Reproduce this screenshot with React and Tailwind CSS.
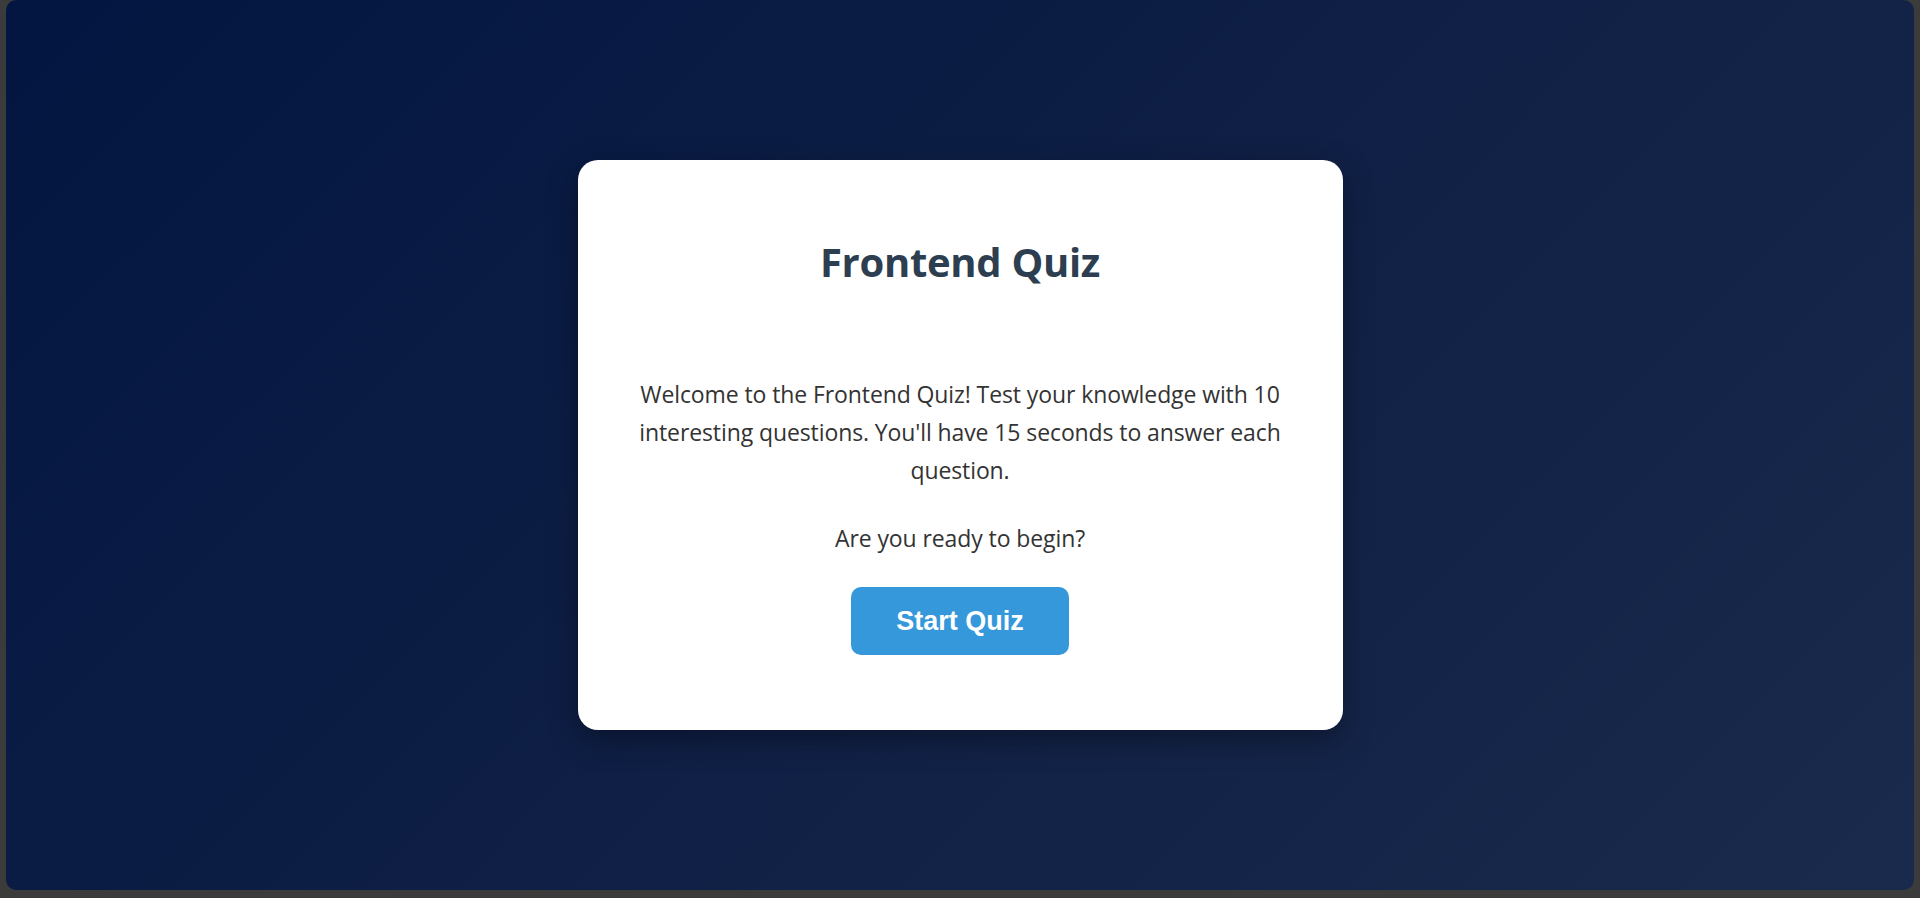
export default function App() {
  return (
    <div className="w-[1920px] h-[898px] bg-[#3b3b3b] pl-[6px] pr-[6px] pb-[8px]">
      <div className="h-full w-full rounded-[10px] bg-[linear-gradient(135deg,#021641_0%,#0f1f45_50%,#1a2a4c_100%)] flex items-start justify-center pt-[160px]">
        <div
          className="w-[765px] h-[570px] bg-white rounded-[20px] shadow-[0_10px_30px_rgba(0,0,0,0.35)] flex flex-col items-center px-[50px]"
          style={{ fontFamily: '"Open Sans", "Noto Sans", sans-serif' }}
        >
          <h1 className="mt-[78px] text-[40px] leading-[48px] font-bold text-[#2c3e50] tracking-[-0.3px]">
            Frontend Quiz
          </h1>
          <p className="mt-[89px] text-[23px] leading-[38px] text-[#333333] text-center tracking-[-0.1px]">
            Welcome to the Frontend Quiz! Test your knowledge with 10 interesting questions. You'll have 15 seconds to answer each question.
          </p>
          <p className="mt-[30px] text-[23px] leading-[38px] text-[#333333] text-center tracking-[-0.1px]">
            Are you ready to begin?
          </p>
          <button
            className="mt-[30px] w-[218px] h-[68px] rounded-[10px] bg-[#3498db] text-white font-bold text-[27px]"
            style={{ fontFamily: '"Liberation Sans", Arial, sans-serif' }}
          >
            Start Quiz
          </button>
        </div>
      </div>
    </div>
  );
}
